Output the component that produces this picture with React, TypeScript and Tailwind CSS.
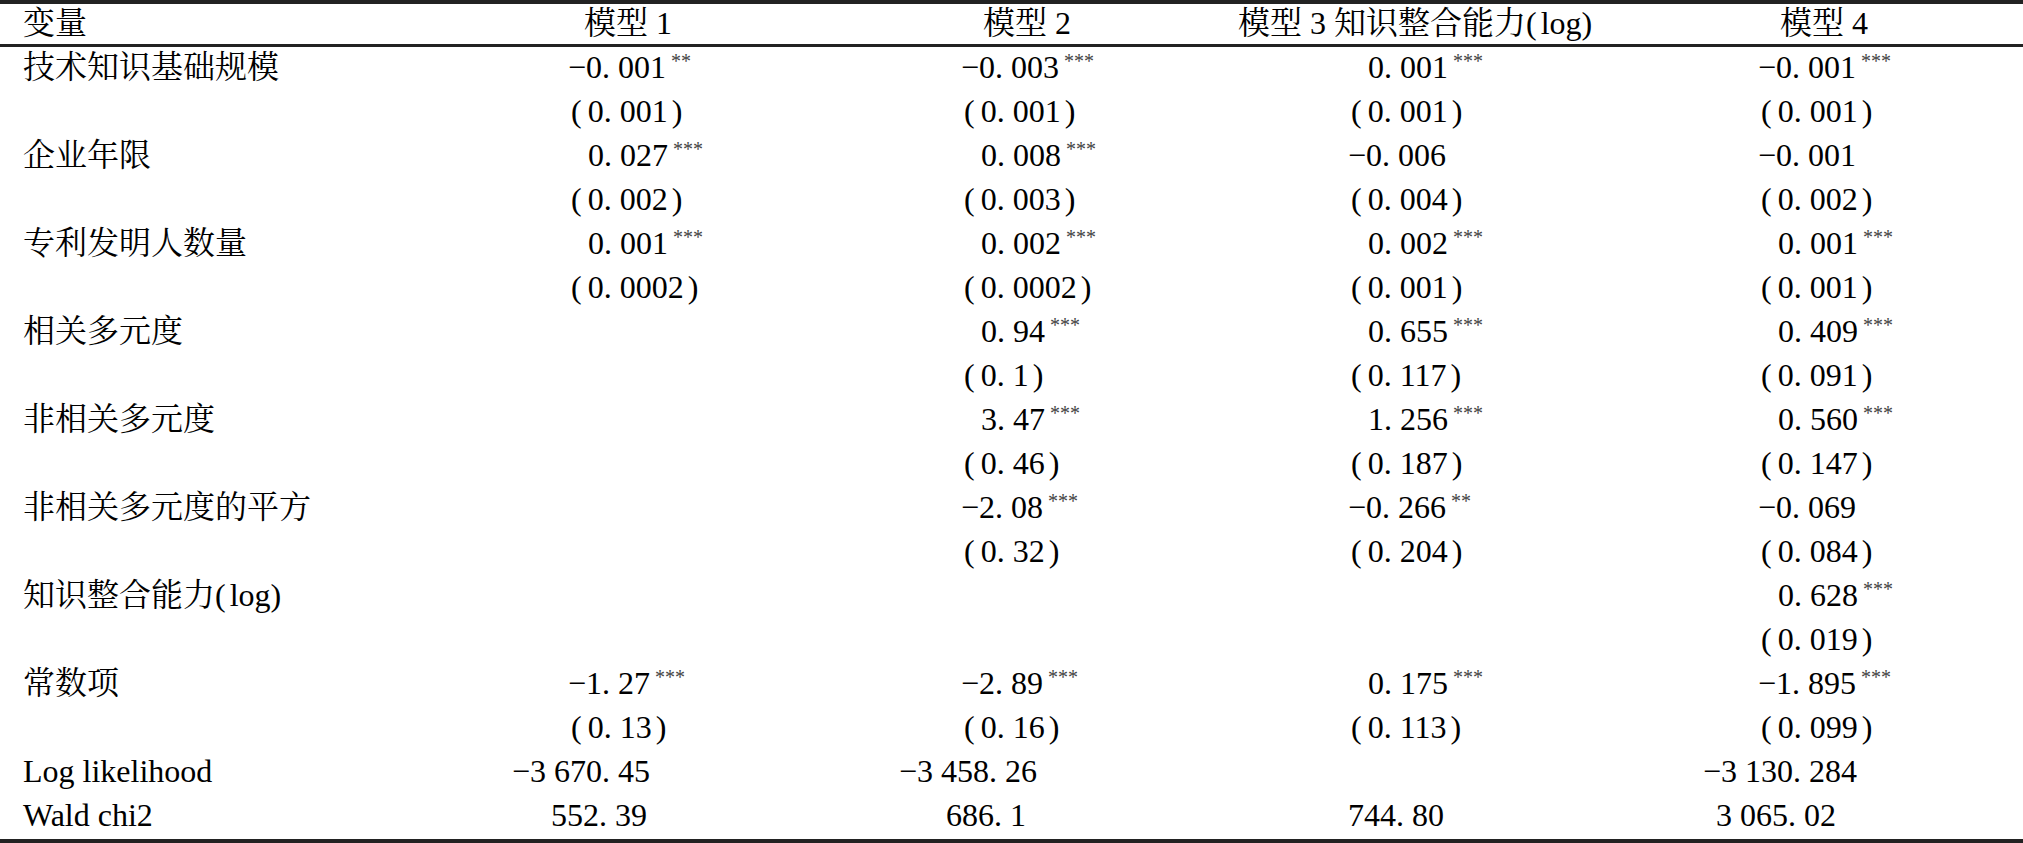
import React from 'react';

type Cell = { v: string; s?: string; cls?: string; paren?: boolean } | null;

const neg = 'pl-0';
const pos = 'pl-[20px]';
const par = 'pl-[3px]';

const n = (v: string, s?: string): Cell => ({ v, s, cls: v.startsWith('−') ? neg : pos });
const p = (v: string): Cell => ({ v, cls: par, paren: true });

// Table rows: label + four model columns
const rows: { label: React.ReactNode; cells: Cell[] }[] = [
  { label: '技术知识基础规模', cells: [n('−0. 001', '**'), n('−0. 003', '***'), n('0. 001', '***'), n('−0. 001', '***')] },
  { label: '', cells: [p('0. 001'), p('0. 001'), p('0. 001'), p('0. 001')] },
  { label: '企业年限', cells: [n('0. 027', '***'), n('0. 008', '***'), n('−0. 006'), n('−0. 001')] },
  { label: '', cells: [p('0. 002'), p('0. 003'), p('0. 004'), p('0. 002')] },
  { label: '专利发明人数量', cells: [n('0. 001', '***'), n('0. 002', '***'), n('0. 002', '***'), n('0. 001', '***')] },
  { label: '', cells: [p('0. 0002'), p('0. 0002'), p('0. 001'), p('0. 001')] },
  { label: '相关多元度', cells: [null, n('0. 94', '***'), n('0. 655', '***'), n('0. 409', '***')] },
  { label: '', cells: [null, p('0. 1'), p('0. 117'), p('0. 091')] },
  { label: '非相关多元度', cells: [null, n('3. 47', '***'), n('1. 256', '***'), n('0. 560', '***')] },
  { label: '', cells: [null, p('0. 46'), p('0. 187'), p('0. 147')] },
  { label: '非相关多元度的平方', cells: [null, n('−2. 08', '***'), n('−0. 266', '**'), n('−0. 069')] },
  { label: '', cells: [null, p('0. 32'), p('0. 204'), p('0. 084')] },
  {
    label: (
      <>
        知识整合能力(<span className="ml-[4px]">log</span>)
      </>
    ),
    cells: [null, null, null, n('0. 628', '***')],
  },
  { label: '', cells: [null, null, null, p('0. 019')] },
  { label: '常数项', cells: [n('−1. 27', '***'), n('−2. 89', '***'), n('0. 175', '***'), n('−1. 895', '***')] },
  { label: '', cells: [p('0. 13'), p('0. 16'), p('0. 113'), p('0. 099')] },
  {
    label: 'Log likelihood',
    cells: [
      { v: '−3 670. 45', cls: '-ml-[56px]' },
      { v: '−3 458. 26', cls: '-ml-[62px]' },
      null,
      { v: '−3 130. 284', cls: '-ml-[55px]' },
    ],
  },
  {
    label: 'Wald chi2',
    cells: [
      { v: '552. 39', cls: '-ml-[17px]' },
      { v: '686. 1', cls: '-ml-[15px]' },
      { v: '744. 80', cls: 'pl-0' },
      { v: '3 065. 02', cls: '-ml-[42px]' },
    ],
  },
];

const ValueCell: React.FC<{ cell: Cell }> = ({ cell }) => {
  if (!cell) return <div className="h-[44px]" />;
  return (
    <div className={`h-[44px] pb-[4px] flex items-center whitespace-nowrap ${cell.cls ?? ''}`}>
      {cell.paren ? (
        <span>
          (<span className="ml-[6px] mr-[4px]">{cell.v}</span>)
        </span>
      ) : (
        <span>{cell.v}</span>
      )}
      {cell.s && <span className="ml-[5px] self-start mt-[4px] text-[20px] leading-none text-[#444]">{cell.s}</span>}
    </div>
  );
};

const App: React.FC = () => {
  return (
    <div className="w-[2023px] h-[843px] overflow-hidden bg-white text-black text-[32px] leading-none font-['Liberation_Serif','Noto_Serif_CJK_SC','Noto_Sans_CJK_SC',serif]">
      {/* header */}
      <div className="h-[47px] pb-[2px] border-t-4 border-b-[3px] border-[#222] flex items-center">
        <div className="w-[584px] pl-[23px]">变量</div>
        <div className="w-[399px]">模型 1</div>
        <div className="w-[255px]">模型 2</div>
        <div className="w-[542px]">
          模型 3 知识整合能力(<span className="ml-[4px]">log</span>)
        </div>
        <div>模型 4</div>
      </div>

      {/* body */}
      <div className="grid grid-cols-[568px_393px_387px_410px_265px] border-b-4 border-[#222]">
        {rows.map((r, i) => (
          <React.Fragment key={i}>
            <div className="h-[44px] pb-[4px] flex items-center pl-[23px] whitespace-nowrap">{r.label}</div>
            {r.cells.map((c, j) => (
              <ValueCell key={j} cell={c} />
            ))}
          </React.Fragment>
        ))}
      </div>
    </div>
  );
};

export default App;
